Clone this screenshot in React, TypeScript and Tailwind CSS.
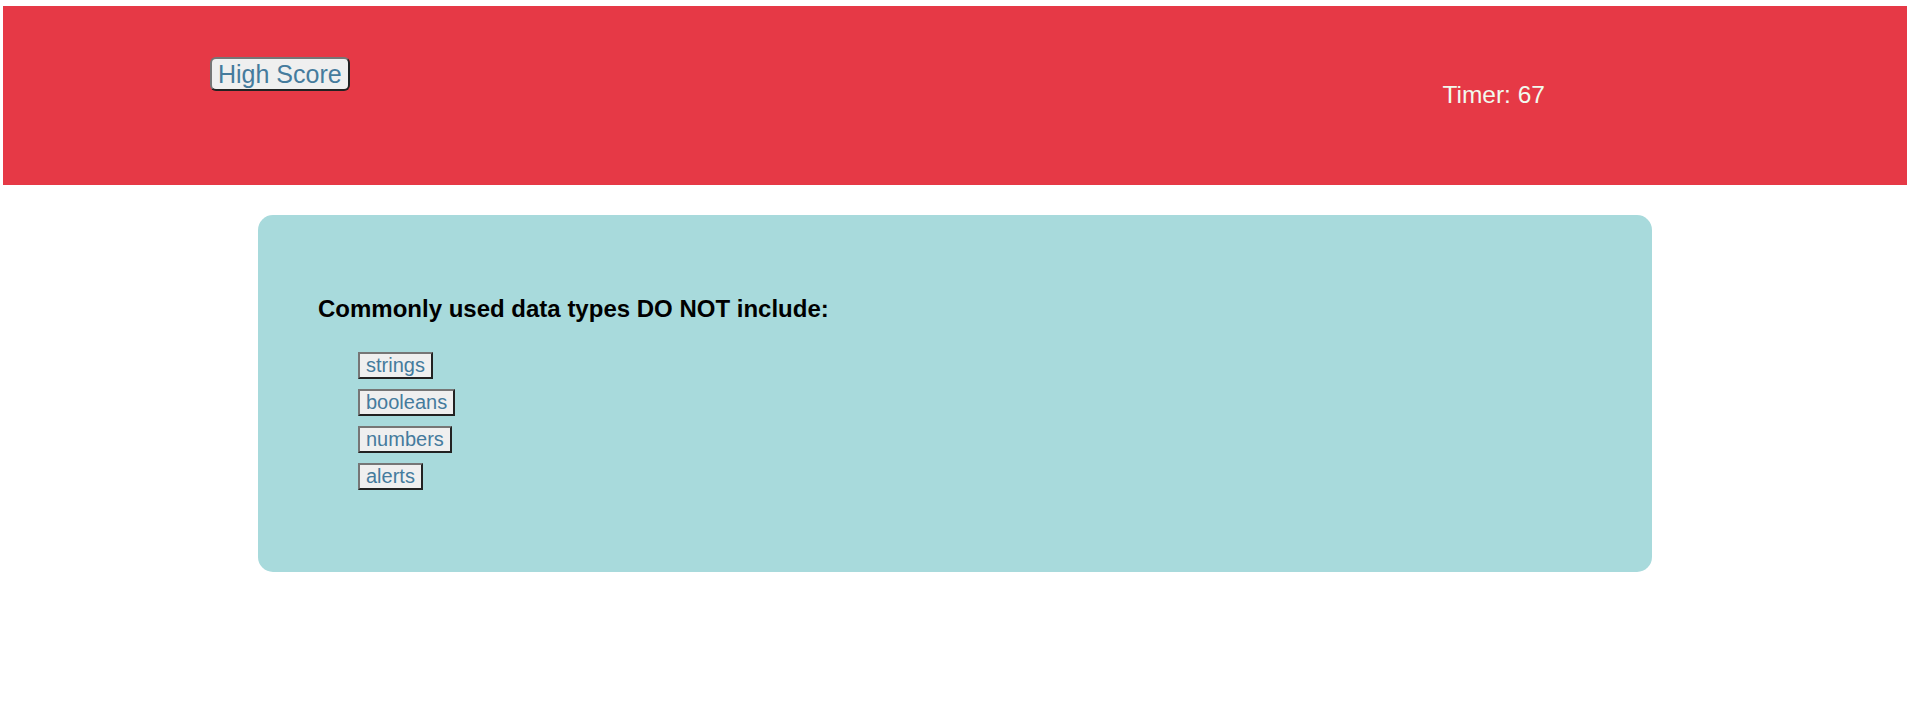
import React from 'react';

const answers = ['strings', 'booleans', 'numbers', 'alerts'];

const App = () => {
  const [timer] = React.useState(67);

  return (
    <div className="min-h-[704px] bg-white font-['Liberation_Sans',Arial,sans-serif] pt-[6px]">
      {/* Header */}
      <header className="ml-[3px] mr-[7px] h-[179px] bg-[#E63946] flex items-start pl-[207px] pr-[362px]">
        <button className="mt-[51px] rounded-[6px] border-2 border-[#767676] border-r-[#222] border-b-[#222] bg-[#efefef] px-[6px] py-px text-[25px] leading-[28px] text-[#457B9D]">
          High Score
        </button>
        <p className="ml-auto self-center text-[24.5px] text-[#F1FAEE]">Timer: {timer}</p>
      </header>

      {/* Question card */}
      <main className="mt-[30px] flex">
        <div className="ml-[258px] w-[1394px] h-[357px] rounded-[15px] bg-[#A8DADC] pt-[80px] pl-[60px]">
          <h3 className="text-[24px] font-bold leading-[27px] text-black">
            Commonly used data types DO NOT include:
          </h3>
          <ul className="mt-[30px] pl-[40px] flex flex-col gap-[10px]">
            {answers.map((a) => (
              <li key={a}>
                <button className="border-2 border-[#767676] border-r-[#222] border-b-[#222] bg-[#efefef] px-[6px] py-0 text-[20px] leading-[23px] text-[#457B9D]">
                  {a}
                </button>
              </li>
            ))}
          </ul>
        </div>
      </main>
    </div>
  );
};

export default App;
